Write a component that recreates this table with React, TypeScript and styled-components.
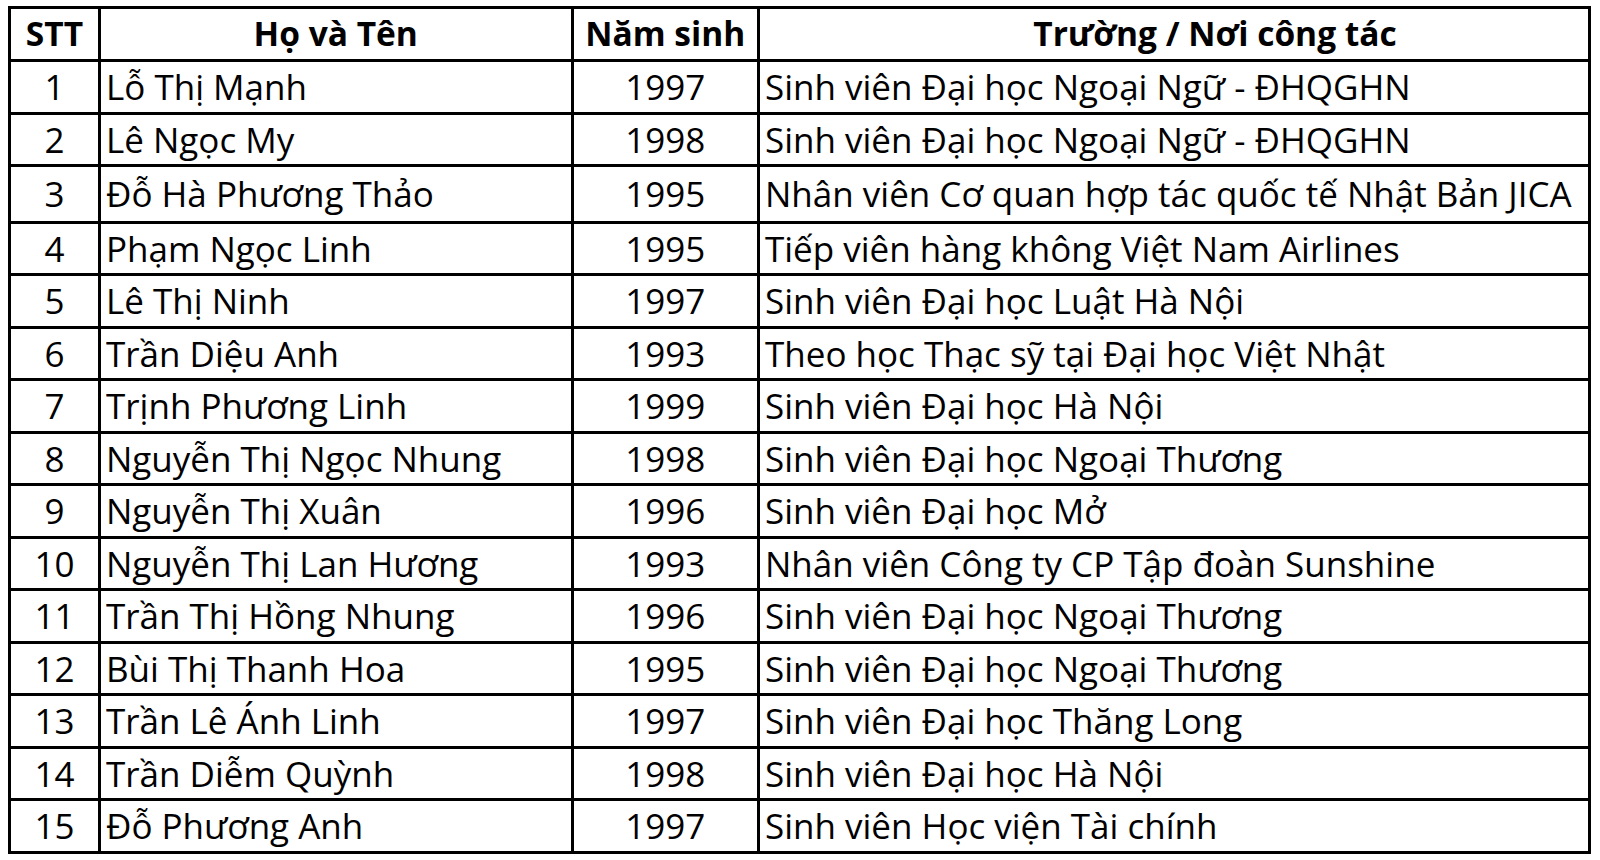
import React from "react";
import styled, { createGlobalStyle } from "styled-components";

const GlobalStyle = createGlobalStyle`
  html, body {
    margin: 0;
    padding: 0;
    background: #ffffff;
  }
  body {
    font-family: "Open Sans", "Noto Sans", "Liberation Sans", sans-serif;
    color: #000;
  }
`;

const Page = styled.div`
  padding: 6px 9px 0 8px;
  background: #fff;
`;

const Grid = styled.div`
  display: grid;
  grid-template-columns: 87px 469.5px 183.5px 828px;
  grid-template-rows: 50px 49.5px 49.5px 53.5px;
  grid-auto-rows: 49.5px;
  gap: 3px;
  padding: 3px;
  background: #000;
  width: max-content;
`;

type CellProps = { $align?: "left" | "center"; $bold?: boolean; $shift?: number };

const Cell = styled.div<CellProps>`
  background: #fff;
  display: flex;
  align-items: center;
  justify-content: ${(p) => (p.$align === "left" ? "flex-start" : "center")};
  padding-left: ${(p) => (p.$align === "left" ? "5px" : `${p.$shift ?? 0}px`)};
  font-size: ${(p) => (p.$bold ? "33.5px" : "35px")};
  font-weight: ${(p) => (p.$bold ? 700 : 400)};
  line-height: 1;
  white-space: nowrap;
  overflow: hidden;
`;

const rows: [string, string, string][] = [
  ["Lỗ Thị Mạnh", "1997", "Sinh viên Đại học Ngoại Ngữ - ĐHQGHN"],
  ["Lê Ngọc My", "1998", "Sinh viên Đại học Ngoại Ngữ - ĐHQGHN"],
  ["Đỗ Hà Phương Thảo", "1995", "Nhân viên Cơ quan hợp tác quốc tế Nhật Bản JICA"],
  ["Phạm Ngọc Linh", "1995", "Tiếp viên hàng không Việt Nam Airlines"],
  ["Lê Thị Ninh", "1997", "Sinh viên Đại học Luật Hà Nội"],
  ["Trần Diệu Anh", "1993", "Theo học Thạc sỹ tại Đại học Việt Nhật"],
  ["Trịnh Phương Linh", "1999", "Sinh viên Đại học Hà Nội"],
  ["Nguyễn Thị Ngọc Nhung", "1998", "Sinh viên Đại học Ngoại Thương"],
  ["Nguyễn Thị Xuân", "1996", "Sinh viên Đại học Mở"],
  ["Nguyễn Thị Lan Hương", "1993", "Nhân viên Công ty CP Tập đoàn Sunshine"],
  ["Trần Thị Hồng Nhung", "1996", "Sinh viên Đại học Ngoại Thương"],
  ["Bùi Thị Thanh Hoa", "1995", "Sinh viên Đại học Ngoại Thương"],
  ["Trần Lê Ánh Linh", "1997", "Sinh viên Đại học Thăng Long"],
  ["Trần Diễm Quỳnh", "1998", "Sinh viên Đại học Hà Nội"],
  ["Đỗ Phương Anh", "1997", "Sinh viên Học viện Tài chính"],
];

export default function App() {
  return (
    <>
      <GlobalStyle />
      <Page>
        <Grid>
          <Cell $bold>STT</Cell>
          <Cell $bold>Họ và Tên</Cell>
          <Cell $bold>Năm sinh</Cell>
          <Cell $bold $shift={82}>Trường / Nơi công tác</Cell>
          {rows.map(([name, year, place], i) => (
            <React.Fragment key={i}>
              <Cell>{i + 1}</Cell>
              <Cell $align="left">{name}</Cell>
              <Cell>{year}</Cell>
              <Cell $align="left">{place}</Cell>
            </React.Fragment>
          ))}
        </Grid>
      </Page>
    </>
  );
}
